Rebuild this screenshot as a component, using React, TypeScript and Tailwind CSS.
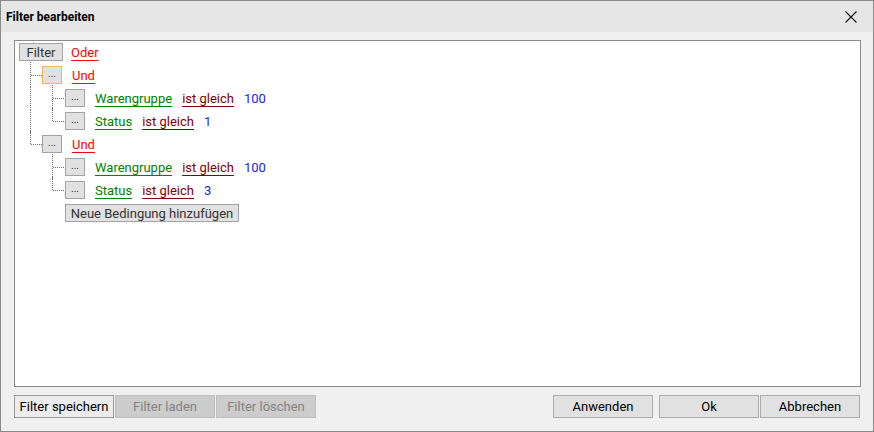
import React from "react";

type Seg = "through" | "blank";
type Conn = "mid" | "last";

function Connector({ kind, vx }: { kind: Conn; vx: number }) {
  const x = vx + 0.5;
  return (
    <svg width={23} height={23} className="shrink-0 overflow-visible" style={{ overflow: "visible" }}>
      <line
        x1={x}
        y1={-2}
        x2={x}
        y2={kind === "last" ? 12 : 23}
        stroke="#6e6e6e"
        strokeWidth={1}
        strokeDasharray="1 1"
        shapeRendering="crispEdges"
      />
      <line
        x1={vx + 1}
        y1={11.5}
        x2={23}
        y2={11.5}
        stroke="#6e6e6e"
        strokeWidth={1}
        strokeDasharray="1 1"
        shapeRendering="crispEdges"
      />
    </svg>
  );
}

function Through({ seg, vx }: { seg: Seg; vx: number }) {
  return (
    <svg width={23} height={23} className="shrink-0" style={{ overflow: "visible" }}>
      {seg === "through" && (
        <line
          x1={vx + 0.5}
          y1={0}
          x2={vx + 0.5}
          y2={23}
          stroke="#6e6e6e"
          strokeWidth={1}
          strokeDasharray="1 1"
          shapeRendering="crispEdges"
        />
      )}
    </svg>
  );
}

function DotBtn({ focused }: { focused?: boolean }) {
  return (
    <div
      className={
        "w-[20px] h-[18px] mt-[2px] shrink-0 flex items-center justify-center bg-[#e1e1e1] border text-[#333] text-[10px] leading-none " +
        (focused ? "border-[#f7b553]" : "border-[#a3a3a3]")
      }
    >
      <span className="-mt-[2px]">...</span>
    </div>
  );
}

function Cond({ field, op, val }: { field: string; op: string; val: string }) {
  return (
    <div className="flex items-center h-[18px] mt-[3px] gap-[10px] ml-[10px]">
      <span className="text-[#008000] underline underline-offset-[3px] decoration-[1px]">{field}</span>
      <span className="text-[#800000] underline underline-offset-[3px] decoration-[1px]">{op}</span>
      <span className="text-[#2020ff]">{val}</span>
    </div>
  );
}

function Logic({ text }: { text: string }) {
  return (
    <div className="flex items-center h-[18px] mt-[3px] ml-[10px]">
      <span className="text-[#ff0000] underline underline-offset-[3px] decoration-[1px]">{text}</span>
    </div>
  );
}

function Row({ children }: { children: React.ReactNode }) {
  return <div className="flex h-[23px] items-start">{children}</div>;
}

function BottomBtn({
  label,
  variant,
}: {
  label: string;
  variant: "normal" | "primary" | "disabled";
}) {
  const cls =
    variant === "disabled"
      ? "bg-[#cccccc] border-[#bfbfbf] text-[#838383]"
      : variant === "primary"
      ? "bg-[#ececec] border-[#9a9a9a] text-black"
      : "bg-[#e1e1e1] border-[#adadad] text-black";
  return (
    <div className={"w-[100px] h-[23px] border flex items-center justify-center text-[13px] " + cls}>
      {label}
    </div>
  );
}

export default function App() {
  return (
    <div
      className="w-[874px] h-[432px] border border-[#8a8a8a] bg-[#f0f0f0] flex flex-col overflow-hidden"
      style={{ fontFamily: "Roboto, 'Liberation Sans', sans-serif" }}
    >
      {/* Title bar */}
      <div className="h-[31px] shrink-0 bg-[#e6e6e6] flex items-center justify-between pl-[5px] pr-[16px]">
        <span className="text-[12px] font-bold text-black">Filter bearbeiten</span>
        <svg width={12} height={12} viewBox="0 0 12 12">
          <path d="M0.5 0.5 L11.5 11.5 M11.5 0.5 L0.5 11.5" stroke="#111" strokeWidth={1.1} fill="none" />
        </svg>
      </div>

      <div className="flex-1 flex flex-col pl-[13px] pr-[12px] pt-[8px]">
        {/* Tree panel */}
        <div className="h-[347px] border border-[#8c8c8c] bg-white pl-[4px] text-[13px] flex flex-col">
          <Row>
            <div className="w-[44px] h-[18px] mt-[2px] flex items-center justify-center bg-[#e1e1e1] border border-[#a3a3a3] text-[#333]">
              <span className="mt-[1px]">Filter</span>
            </div>
            <div className="flex items-center h-[18px] mt-[3px] ml-[8px]">
              <span className="text-[#ff0000] underline underline-offset-[3px] decoration-[1px]">Oder</span>
            </div>
          </Row>
          <Row>
            <Connector kind="mid" vx={11} />
            <DotBtn focused />
            <Logic text="Und" />
          </Row>
          <Row>
            <Through seg="through" vx={11} />
            <Connector kind="mid" vx={10} />
            <DotBtn />
            <Cond field="Warengruppe" op="ist gleich" val="100" />
          </Row>
          <Row>
            <Through seg="through" vx={11} />
            <Connector kind="last" vx={10} />
            <DotBtn />
            <Cond field="Status" op="ist gleich" val="1" />
          </Row>
          <Row>
            <Connector kind="last" vx={11} />
            <DotBtn />
            <Logic text="Und" />
          </Row>
          <Row>
            <Through seg="blank" vx={11} />
            <Connector kind="mid" vx={10} />
            <DotBtn />
            <Cond field="Warengruppe" op="ist gleich" val="100" />
          </Row>
          <Row>
            <Through seg="blank" vx={11} />
            <Connector kind="last" vx={10} />
            <DotBtn />
            <Cond field="Status" op="ist gleich" val="3" />
          </Row>
          <Row>
            <div className="w-[46px] shrink-0" />
            <div className="w-[174px] h-[18px] mt-[2px] flex items-center justify-center bg-[#e1e1e1] border border-[#a3a3a3] text-[#333]">
              <span className="mt-[1px]">Neue Bedingung hinzufügen</span>
            </div>
          </Row>
        </div>

        {/* Bottom buttons */}
        <div className="mt-[8px] flex items-center">
          <div className="flex gap-[1px]">
            <BottomBtn label="Filter speichern" variant="primary" />
            <BottomBtn label="Filter laden" variant="disabled" />
            <BottomBtn label="Filter löschen" variant="disabled" />
          </div>
          <div className="ml-auto mr-[1px] flex">
            <BottomBtn label="Anwenden" variant="normal" />
            <div className="w-[6px]" />
            <BottomBtn label="Ok" variant="normal" />
            <div className="w-[1px]" />
            <BottomBtn label="Abbrechen" variant="normal" />
          </div>
        </div>
      </div>
    </div>
  );
}
